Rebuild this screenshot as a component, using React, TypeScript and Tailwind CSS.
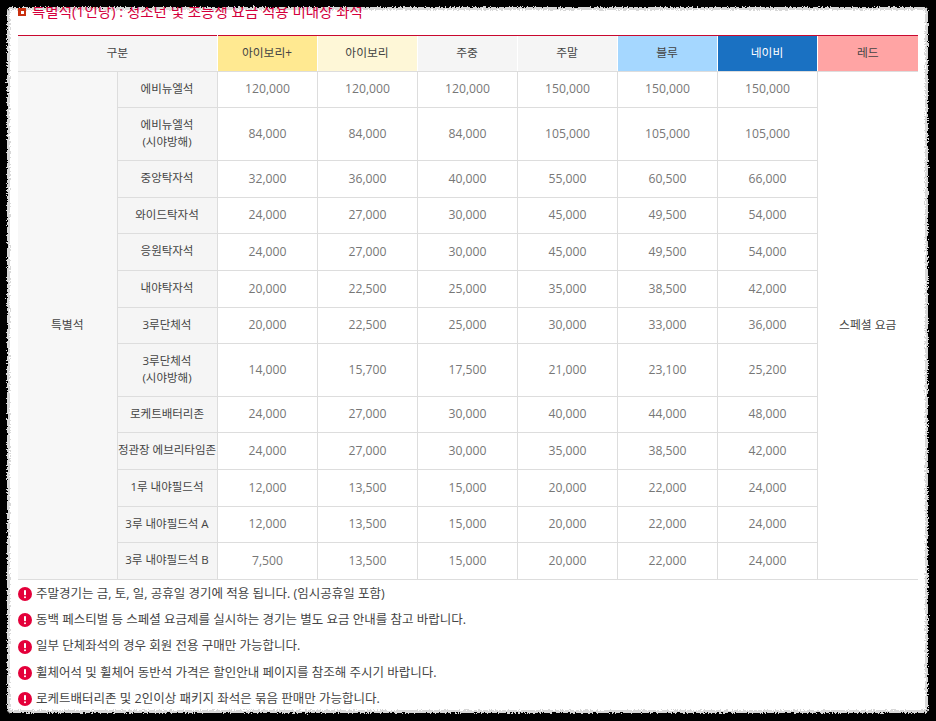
const FONT = "font-['Open_Sans','Noto_Sans_CJK_KR',sans-serif]";

type Row = { name: string[]; h: string; p: string[] };
const rows: Row[] = [
  { name: ["에비뉴엘석"], h: "h-[36px]", p: ["120,000", "120,000", "120,000", "150,000", "150,000", "150,000"] },
  { name: ["에비뉴엘석", "(시야방해)"], h: "h-[53px]", p: ["84,000", "84,000", "84,000", "105,000", "105,000", "105,000"] },
  { name: ["중앙탁자석"], h: "h-[37px]", p: ["32,000", "36,000", "40,000", "55,000", "60,500", "66,000"] },
  { name: ["와이드탁자석"], h: "h-[36px]", p: ["24,000", "27,000", "30,000", "45,000", "49,500", "54,000"] },
  { name: ["응원탁자석"], h: "h-[37px]", p: ["24,000", "27,000", "30,000", "45,000", "49,500", "54,000"] },
  { name: ["내야탁자석"], h: "h-[37px]", p: ["20,000", "22,500", "25,000", "35,000", "38,500", "42,000"] },
  { name: ["3루단체석"], h: "h-[36px]", p: ["20,000", "22,500", "25,000", "30,000", "33,000", "36,000"] },
  { name: ["3루단체석", "(시야방해)"], h: "h-[53px]", p: ["14,000", "15,700", "17,500", "21,000", "23,100", "25,200"] },
  { name: ["로케트배터리존"], h: "h-[36px]", p: ["24,000", "27,000", "30,000", "40,000", "44,000", "48,000"] },
  { name: ["정관장 에브리타임존"], h: "h-[37px]", p: ["24,000", "27,000", "30,000", "35,000", "38,500", "42,000"] },
  { name: ["1루 내야필드석"], h: "h-[37px]", p: ["12,000", "13,500", "15,000", "20,000", "22,000", "24,000"] },
  { name: ["3루 내야필드석 A"], h: "h-[36px]", p: ["12,000", "13,500", "15,000", "20,000", "22,000", "24,000"] },
  { name: ["3루 내야필드석 B"], h: "h-[37px]", p: ["7,500", "13,500", "15,000", "20,000", "22,000", "24,000"] },
];

const notes = [
  "주말경기는 금, 토, 일, 공휴일 경기에 적용 됩니다. (임시공휴일 포함)",
  "동백 페스티벌 등 스페셜 요금제를 실시하는 경기는 별도 요금 안내를 참고 바랍니다.",
  "일부 단체좌석의 경우 회원 전용 구매만 가능합니다.",
  "휠체어석 및 휠체어 동반석 가격은 할인안내 페이지를 참조해 주시기 바랍니다.",
  "로케트배터리존 및 2인이상 패키지 좌석은 묶음 판매만 가능합니다.",
];

const headers = [
  { t: "아이보리+", c: "bg-[#ffe991] text-[#444444]" },
  { t: "아이보리", c: "bg-[#fef7d7] text-[#444444]" },
  { t: "주중", c: "bg-[#f5f5f5] text-[#444444]" },
  { t: "주말", c: "bg-[#f5f5f5] text-[#444444]" },
  { t: "블루", c: "bg-[#a5d7ff] text-[#444444]" },
  { t: "네이비", c: "bg-[#1a71c2] text-white" },
  { t: "레드", c: "bg-[#ffa4a4] text-[#444444]" },
];

function Alert() {
  return (
    <svg width="14" height="14" viewBox="0 0 14 14" className="shrink-0">
      <circle cx="7" cy="7" r="7" fill="#e4003a" />
      <rect x="6" y="3" width="2" height="5.2" rx="0.8" fill="#fff" />
      <rect x="6" y="9.2" width="2" height="2" rx="1" fill="#fff" />
    </svg>
  );
}

export default function App() {
  return (
    <div className={`w-[936px] h-[721px] bg-black overflow-hidden pt-[7px] pl-[7px] ${FONT}`}>
      <svg width="0" height="0" className="block">
        <filter id="rough" x="-2%" y="-2%" width="104%" height="104%">
          <feTurbulence type="fractalNoise" baseFrequency="0.6" numOctaves="2" seed="4" />
          <feDisplacementMap in="SourceGraphic" scale="5" />
          <feGaussianBlur stdDeviation="0.4" />
        </filter>
      </svg>
      <div className="relative w-[921px] h-[706px]">
        <div className="absolute inset-0 rounded-[4px] bg-white border-[3px] border-[#d8d8d8] [filter:url(#rough)]" />
        <div className="relative h-full overflow-hidden pl-[11px]">
          <div className="flex items-center h-[10px] gap-[6px] text-[14.5px] leading-[20px] text-[#d4003c]">
            <span className="flex items-center justify-center w-[8px] h-[8px] bg-[#c9300f] shrink-0">
              <span className="w-[3px] h-[3px] bg-white" />
            </span>
            <span className="whitespace-nowrap">특별석(1인당) : 청소년 및 초등생 요금 적용 미대상 좌석</span>
          </div>
          <table className="mt-[18px] w-[900px] table-fixed border-collapse text-[11.8px] text-[#444444]">
            <colgroup>
              <col className="w-[99px]" />
              <col className="w-[100px]" />
              <col className="w-[100px]" />
              <col className="w-[100px]" />
              <col className="w-[100px]" />
              <col className="w-[100px]" />
              <col className="w-[100px]" />
              <col className="w-[100px]" />
              <col className="w-[101px]" />
            </colgroup>
            <thead>
              <tr className="h-[36px]">
                <th colSpan={2} className="font-normal bg-[#f5f5f5] border-t border-t-[#c9082f] border-b border-b-[#dddddd] border-r border-r-[#ffffff] pb-[2px]">
                  구분
                </th>
                {headers.map((h) => (
                  <th key={h.t} className={`font-normal border-t border-t-[#c9082f] border-b border-b-[#dddddd] border-l border-l-white pb-[2px] ${h.c}`}>
                    {h.t}
                  </th>
                ))}
              </tr>
            </thead>
            <tbody>
              {rows.map((r, i) => (
                <tr key={i} className={r.h}>
                  {i === 0 && (
                    <td rowSpan={13} className="bg-[#f7f7f7] text-center border-b border-[#dddddd] pb-[2px]">
                      특별석
                    </td>
                  )}
                  <td className="bg-[#f5f5f5] text-center text-[11.5px] border border-[#dddddd] px-0 pb-[3px] leading-[17px] whitespace-nowrap">
                    {r.name.map((n) => (
                      <div key={n}>{n}</div>
                    ))}
                  </td>
                  {r.p.map((v, j) => (
                    <td key={j} className="text-center text-[12.2px] text-[#777777] border border-[#dddddd] pl-[1px]">
                      {v}
                    </td>
                  ))}
                  {i === 0 && (
                    <td rowSpan={13} className="text-center border-b border-l border-[#dddddd] pb-[2px]">
                      스페셜 요금
                    </td>
                  )}
                </tr>
              ))}
            </tbody>
          </table>
          <ul className="mt-[1px] flex flex-col text-[12.5px] text-[#444444]">
            {notes.map((n) => (
              <li key={n} className="flex items-center h-[26.3px] gap-[4px]">
                <Alert />
                <span className="whitespace-nowrap">{n}</span>
              </li>
            ))}
          </ul>
        </div>
      </div>
    </div>
  );
}
